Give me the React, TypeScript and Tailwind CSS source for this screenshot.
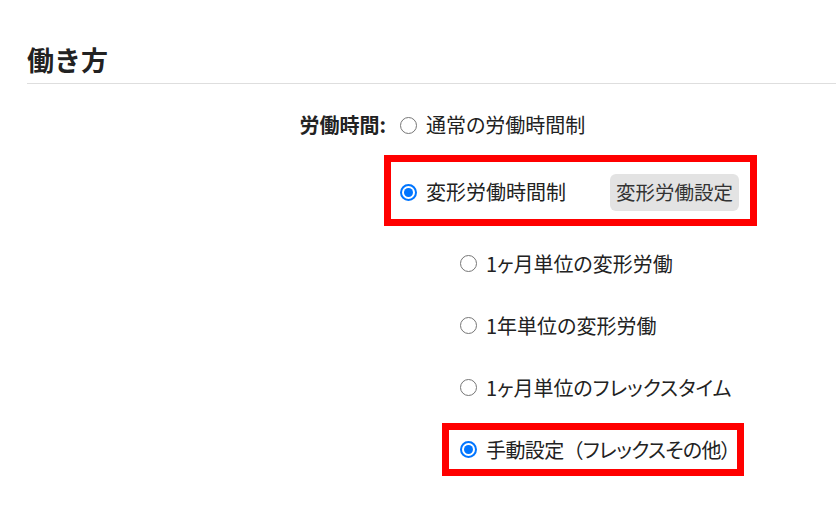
import React, { useState } from 'react';

// --- 勤務形態の選択肢 ---
interface Option {
  id: string;
  label: React.ReactNode;
}

// 全角括弧はプロポーショナル詰めをしない
const Paren = ({ children }: { children: string }) => (
  <span className="[font-feature-settings:normal]">{children}</span>
);

const subOptions: Option[] = [
  { id: 'month', label: '1ヶ月単位の変形労働' },
  { id: 'year', label: '1年単位の変形労働' },
  { id: 'flex', label: '1ヶ月単位のフレックスタイム' },
  {
    id: 'manual',
    label: (
      <span className="tracking-[-0.6px]">
        手動設定<Paren>（</Paren>フレックスその他）
      </span>
    ),
  },
];

const font = { fontFamily: '"Noto Sans CJK JP", "Noto Sans", sans-serif' };

// ラジオボタン（ネイティブ風の見た目）
const Radio = ({ checked, onClick }: { checked: boolean; onClick: () => void }) => (
  <span
    role="radio"
    aria-checked={checked}
    onClick={onClick}
    className={`flex h-[17px] w-[17px] shrink-0 items-center justify-center rounded-full bg-white ${
      checked ? 'border-2 border-[#0075ff]' : 'border-[1.5px] border-[#767676]'
    }`}
  >
    {checked && <span className="h-[9px] w-[9px] rounded-full bg-[#0075ff]" />}
  </span>
);

export default function App() {
  const [mode, setMode] = useState<'normal' | 'variable'>('variable');
  const [sub, setSub] = useState('manual');

  return (
    <div
      className="min-h-[525px] bg-white pl-[27px] pt-[42px] text-[#222] [font-feature-settings:'palt']"
      style={font}
    >
      {/* 見出し */}
      <h2 className="text-[27px] font-bold leading-[36px] [font-feature-settings:normal]">働き方</h2>
      <div className="mt-[5px] border-b border-[#dedede]" />

      <div className="mt-[26px] flex">
        <div className="h-[30px] w-[359px] shrink-0 text-right text-[20px] font-bold leading-[30px]">
          労働時間:
        </div>

        <div className="-ml-[2px] flex flex-col">
          {/* 通常の労働時間制 */}
          <div className="flex h-[30px] items-center gap-[9px] pl-[16px] text-[20px]">
            <Radio checked={mode === 'normal'} onClick={() => setMode('normal')} />
            <span>通常の労働時間制</span>
          </div>

          {/* 変形労働時間制 */}
          <div className="mt-[15px] flex h-[71px] w-[373px] items-center border-[7px] border-[#ff0000] pl-[9px] pr-[11px] pt-[3px]">
            <div className="flex items-center gap-[9px] text-[20px]">
              <Radio checked={mode === 'variable'} onClick={() => setMode('variable')} />
              <span>変形労働時間制</span>
            </div>
            <button className="ml-auto h-[37px] w-[129px] rounded-[6px] bg-[#e3e3e3] text-[19.5px] text-[#333]">
              変形労働設定
            </button>
          </div>

          {/* サブ選択肢 */}
          <div className="ml-[58px] mt-[11px] flex flex-col gap-[9px]">
            {subOptions.map(opt => (
              <div
                key={opt.id}
                className={`flex h-[53px] w-[302px] items-center gap-[9px] border-[7px] pl-[11px] text-[20px] ${
                  opt.id === 'manual' ? 'border-[#ff0000]' : 'border-transparent'
                }`}
              >
                <Radio checked={sub === opt.id} onClick={() => setSub(opt.id)} />
                <span className="whitespace-nowrap">{opt.label}</span>
              </div>
            ))}
          </div>
        </div>
      </div>
    </div>
  );
}
